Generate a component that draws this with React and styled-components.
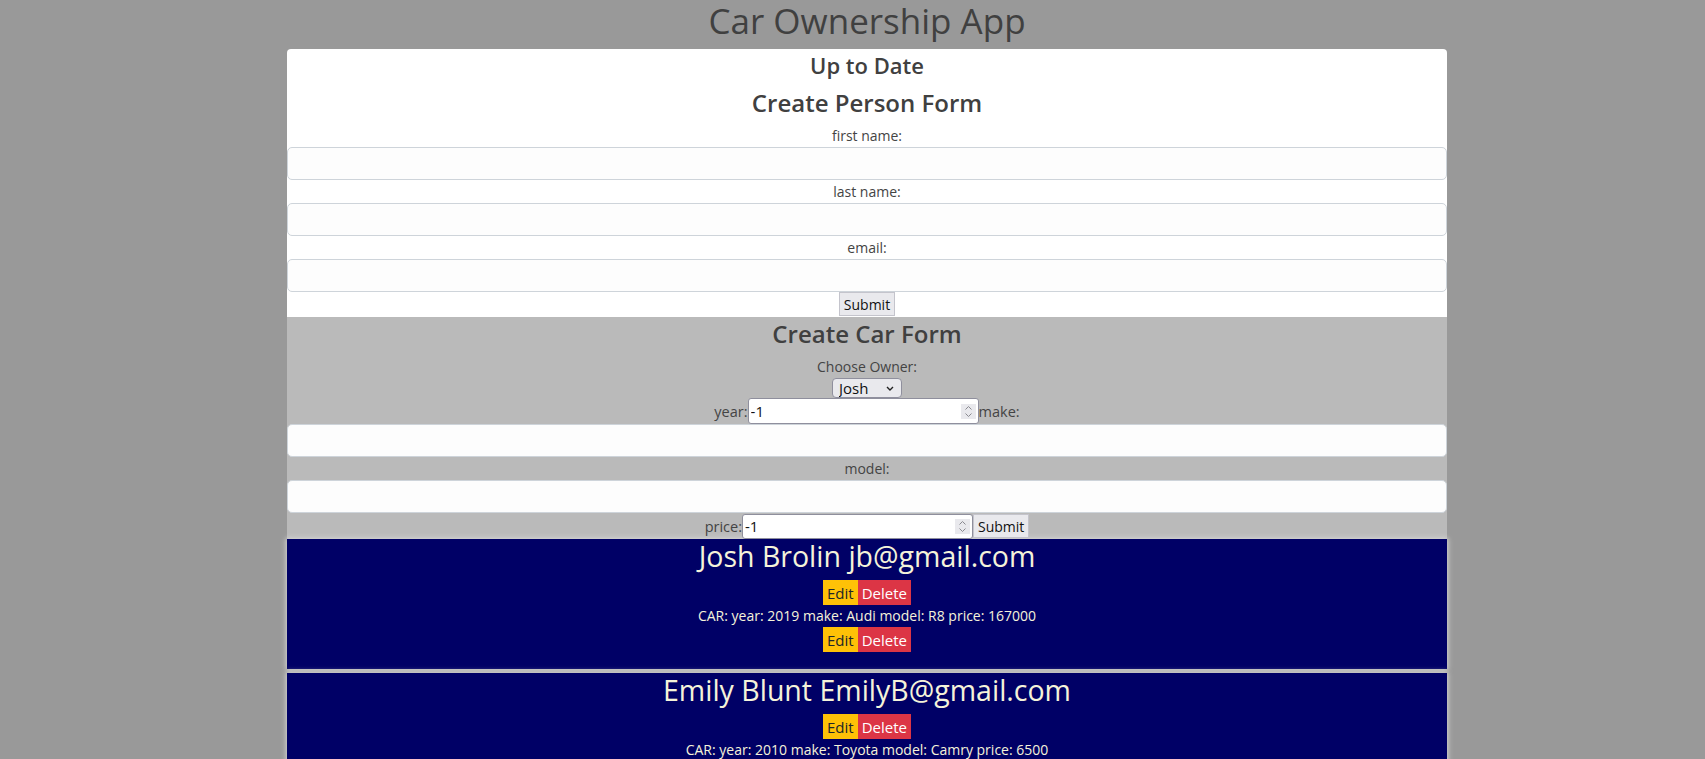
import React from "react";
import styled, { createGlobalStyle } from "styled-components";

const GlobalStyle = createGlobalStyle`
    body{
        margin: 0;
        background: #999999;
        font-family: "Open Sans", "Noto Sans", sans-serif;
        color: #444444;
    }
`

const Column = styled.div`
    width: 1160px;
    margin-left: 287px;
`

const AppTitle = styled.h1`
    margin: 0;
    height: 49px;
    line-height: 42px;
    font-size: 35px;
    font-weight: 400;
    text-align: center;
    color: #404040;
`

const Sheet = styled.div`
    background: #fff;
    border-radius: 4px 4px 0 0;
    display: flex;
    flex-direction: column;
`

const SectionTitle = styled.h2`
    margin: 0;
    text-align: center;
    font-weight: 600;
    font-size: ${props => props.size || 24}px;
    line-height: ${props => props.line || props.height || 36}px;
    height: ${props => props.height || 36}px;
    color: #404040;
`

const FieldLabel = styled.label`
    display: block;
    text-align: center;
    font-size: 14px;
    line-height: 23px;
    height: 23px;
`

const TextInput = styled.input`
    display: block;
    width: 100%;
    box-sizing: border-box;
    height: 33px;
    margin: 0;
    border: 1px solid #ced4da;
    border-radius: 5px;
    background: #fdfdfd;
    font: 15px "Open Sans", sans-serif;
    padding: 0 8px;
`

const Row = styled.div`
    display: flex;
    justify-content: center;
    align-items: ${props => props.align || "center"};
    height: ${props => props.height}px;
    font-size: 14.5px;
`

const Button = styled.button`
    height: 24px;
    padding: 0 4px;
    margin: 0;
    border: 1px solid #c4c4cc;
    border-radius: 0;
    background: #e9e9ed;
    color: #111;
    font: 14px "Open Sans", sans-serif;
`

const CarForm = styled.div`
    background: #bababa;
    display: flex;
    flex-direction: column;
`

const SelectBox = styled.span`
    display: inline-flex;
    align-items: center;
    width: 70px;
    height: 20px;
    box-sizing: border-box;
    border: 1px solid #8f8f9d;
    border-radius: 4px;
    background: #e9e9ed;
    padding-right: 6px;

    select{
        appearance: none;
        flex: 1;
        min-width: 0;
        border: none;
        background: transparent;
        font: 15px "Open Sans", sans-serif;
        color: #111;
        padding: 0 0 0 6px;
        height: 18px;
        line-height: 18px;
        outline: none;
    }
`

const NumberBox = styled.span`
    display: inline-flex;
    align-items: center;
    width: 231px;
    height: ${props => props.height}px;
    box-sizing: border-box;
    border: 1px solid #8f8f9d;
    border-radius: 3px;
    background: #fff;
    padding-right: 2px;

    input{
        appearance: textfield;
        flex: 1;
        min-width: 0;
        border: none;
        outline: none;
        background: transparent;
        font: 15px "Open Sans", sans-serif;
        color: #111;
        padding: 0 2px;
        height: 100%;
    }
    input::-webkit-inner-spin-button,
    input::-webkit-outer-spin-button{
        -webkit-appearance: none;
        margin: 0;
    }
`

const Spinner = styled.span`
    display: flex;
    align-items: center;
    justify-content: center;
    width: 15px;
    height: 15px;
    background: #e9e9ed;
`

const PersonCard = styled.div`
    background: #000066;
    color: #f5f3da;
    display: flex;
    flex-direction: column;
    align-items: center;
    padding-bottom: 17px;
    margin-bottom: 4px;
    box-shadow: 0 0 5px 1px #d6d6d6;
`

const PersonName = styled.h2`
    margin: 0;
    height: 41px;
    line-height: 34px;
    font-size: 28.5px;
    font-weight: 500;
    color: #f5f3da;
`

const CarLine = styled.div`
    height: 22px;
    line-height: 22px;
    font-size: 14px;
`

const Actions = styled.div`
    display: flex;
    height: 25px;
`

const ActionButton = styled.button`
    margin: 0;
    border: none;
    border-radius: 0;
    padding: 0 4px;
    height: 25px;
    font: 15px "Open Sans", sans-serif;
    background: ${props => props.danger ? "#dc3545" : "#ffc107"};
    color: ${props => props.danger ? "#fff" : "#212529"};
`

const people = [
    { name: "Josh Brolin", email: "jb@gmail.com", cars: [{ year: 2019, make: "Audi", model: "R8", price: 167000 }] },
    { name: "Emily Blunt", email: "EmilyB@gmail.com", cars: [{ year: 2010, make: "Toyota", model: "Camry", price: 6500 }] },
]

const Chevron = () => (
    <svg width="10" height="7" viewBox="0 0 10 7">
        <path d="M2 2 L5 5 L8 2" fill="none" stroke="#222" strokeWidth="1.4" />
    </svg>
)

const NumberField = ({ height }) => (
    <NumberBox height={height}>
        <input type="number" defaultValue={-1} />
        <Spinner>
            <svg width="9" height="13" viewBox="0 0 9 13">
                <path d="M1.5 4.5 L4.5 1.5 L7.5 4.5 M1.5 8.5 L4.5 11.5 L7.5 8.5" fill="none" stroke="#8a8a90" strokeWidth="1" />
            </svg>
        </Spinner>
    </NumberBox>
)

const Controls = () => (
    <Actions>
        <ActionButton>Edit</ActionButton>
        <ActionButton danger>Delete</ActionButton>
    </Actions>
)

export default function App() {
    return (
        <Column>
            <GlobalStyle />
            <AppTitle>Car Ownership App</AppTitle>
            <Sheet>
                <SectionTitle size={22} height={32}>Up to Date</SectionTitle>
                <SectionTitle size={24} height={43}>Create Person Form</SectionTitle>
                <FieldLabel>first name:</FieldLabel>
                <TextInput type="text" />
                <FieldLabel>last name:</FieldLabel>
                <TextInput type="text" />
                <FieldLabel>email:</FieldLabel>
                <TextInput type="text" />
                <Row height={25} align="flex-start">
                    <Button>Submit</Button>
                </Row>
            </Sheet>
            <CarForm>
                <SectionTitle size={24} height={38} line={34}>Create Car Form</SectionTitle>
                <FieldLabel>Choose Owner:</FieldLabel>
                <Row height={20}>
                    <SelectBox>
                        <select defaultValue="Josh">
                            <option>Josh</option>
                            <option>Emily</option>
                        </select>
                        <Chevron />
                    </SelectBox>
                </Row>
                <Row height={26}>
                    year:<NumberField height={26} />make:
                </Row>
                <TextInput type="text" />
                <FieldLabel>model:</FieldLabel>
                <TextInput type="text" />
                <Row height={26}>
                    price:<NumberField height={25} /><Button>Submit</Button>
                </Row>
            </CarForm>
            {people.map(p => (
                <PersonCard key={p.email}>
                    <PersonName>{p.name} {p.email}</PersonName>
                    <Controls />
                    {p.cars.map(c => (
                        <React.Fragment key={c.model}>
                            <CarLine>CAR: year: {c.year} make: {c.make} model: {c.model} price: {c.price}</CarLine>
                            <Controls />
                        </React.Fragment>
                    ))}
                </PersonCard>
            ))}
        </Column>
    )
}
